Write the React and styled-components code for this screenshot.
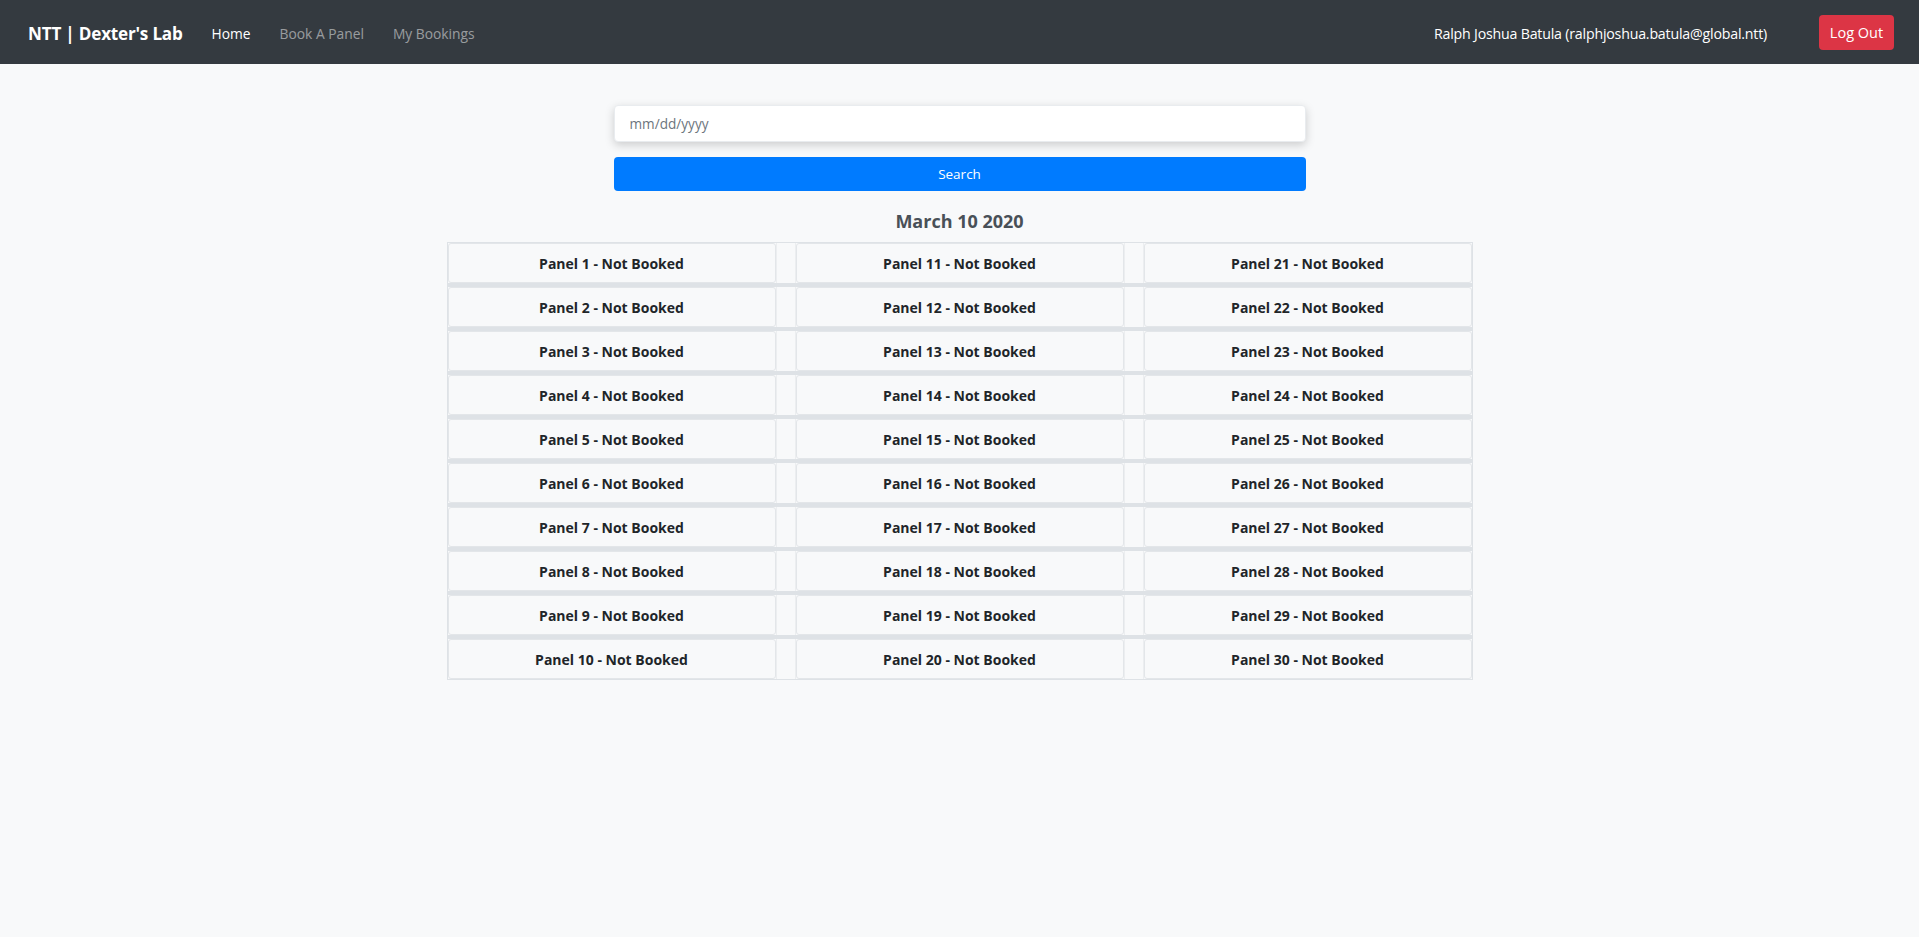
import styled, { createGlobalStyle } from 'styled-components';

const GlobalStyle = createGlobalStyle`
    html, body {
        margin: 0;
        padding: 0;
        background: #f8f9fa;
        font-family: "Open Sans", "Noto Sans", "Liberation Sans", sans-serif;
        color: #212529;
    }
    * {
        box-sizing: border-box;
    }
`

const Navbar = styled.nav`
    height: 64px;
    background: #343a40;
    display: flex;
    align-items: center;
    justify-content: space-between;
    padding: 2px 25px 0 28px;
`

const NavLeft = styled.div`
    display: flex;
    align-items: center;
    gap: 29px;
`

const Brand = styled.a`
    color: #fff;
    font-size: 17.1px;
    font-weight: 700;
    letter-spacing: -0.2px;
    text-decoration: none;
`

const NavLink = styled.a`
    color: ${(p) => (p.$active ? '#fff' : 'rgba(255, 255, 255, 0.5)')};
    font-size: 13.8px;
    text-decoration: none;
`

const NavRight = styled.div`
    display: flex;
    align-items: center;
    gap: 52px;
`

const UserName = styled.span`
    color: #fff;
    font-size: 14.2px;
    letter-spacing: -0.2px;
`

const LogOutButton = styled.button`
    background: #dc3545;
    color: #fff;
    border: none;
    border-radius: 4px;
    width: 75px;
    height: 35px;
    margin-top: -2px;
    font-family: inherit;
    font-size: 14.5px;
`

const Main = styled.main`
    display: flex;
    flex-direction: column;
    align-items: center;
    padding-top: 41px;
`

const SearchForm = styled.form`
    width: 692px;
    display: flex;
    flex-direction: column;
    gap: 15px;
`

const DateInput = styled.input`
    height: 37px;
    border: 1px solid #e9ecef;
    border-radius: 4px;
    background: #fff;
    box-shadow: 0 3px 10px rgba(0, 0, 0, 0.18);
    padding: 0 15px;
    font-family: inherit;
    font-size: 13.6px;
    color: #495057;
    outline: none;
    &::placeholder {
        color: #6c757d;
    }
`

const SearchButton = styled.button`
    height: 34px;
    background: #007bff;
    color: #fff;
    border: none;
    border-radius: 4px;
    font-family: inherit;
    font-size: 13.5px;
`

const DateTitle = styled.h5`
    margin: 18px 0 9px;
    font-size: 18px;
    font-weight: 700;
    color: #495057;
    line-height: 24px;
`

const Board = styled.div`
    width: 1026px;
    border: 1px solid #dee2e6;
    background: #dee2e6;
    display: flex;
    flex-direction: column;
    gap: 4px;
`

const Row = styled.div`
    display: grid;
    grid-template-columns: 1fr 20px 1fr 20px 1fr;
    background: #f8f9fa;
`

const PanelCell = styled.div`
    height: 40px;
    display: flex;
    align-items: center;
    justify-content: center;
    border: 1px solid #e3e6e9;
    border-radius: 3px;
    background: #f8f9fa;
    font-size: 14px;
    font-weight: 700;
    color: #212529;
`

const Spacer = styled.div`
    border-left: 1px solid #eceef0;
    border-right: 1px solid #eceef0;
`

const rows = Array.from({ length: 10 }, (_, i) => [i + 1, i + 11, i + 21])

const App = () => {
    return (
        <>
            <GlobalStyle />
            <Navbar>
                <NavLeft>
                    <Brand href="#">NTT | Dexter's Lab</Brand>
                    <NavLink href="#" $active>Home</NavLink>
                    <NavLink href="#">Book A Panel</NavLink>
                    <NavLink href="#">My Bookings</NavLink>
                </NavLeft>
                <NavRight>
                    <UserName>Ralph Joshua Batula (ralphjoshua.batula@global.ntt)</UserName>
                    <LogOutButton>Log Out</LogOutButton>
                </NavRight>
            </Navbar>
            <Main>
                <SearchForm onSubmit={(e) => e.preventDefault()}>
                    <DateInput type="text" placeholder="mm/dd/yyyy" />
                    <SearchButton>Search</SearchButton>
                </SearchForm>
                <DateTitle>March 10 2020</DateTitle>
                <Board>
                    {rows.map((panels) => (
                        <Row key={panels[0]}>
                            <PanelCell>Panel {panels[0]} - Not Booked</PanelCell>
                            <Spacer />
                            <PanelCell>Panel {panels[1]} - Not Booked</PanelCell>
                            <Spacer />
                            <PanelCell>Panel {panels[2]} - Not Booked</PanelCell>
                        </Row>
                    ))}
                </Board>
            </Main>
        </>
    )
}

export default App;
